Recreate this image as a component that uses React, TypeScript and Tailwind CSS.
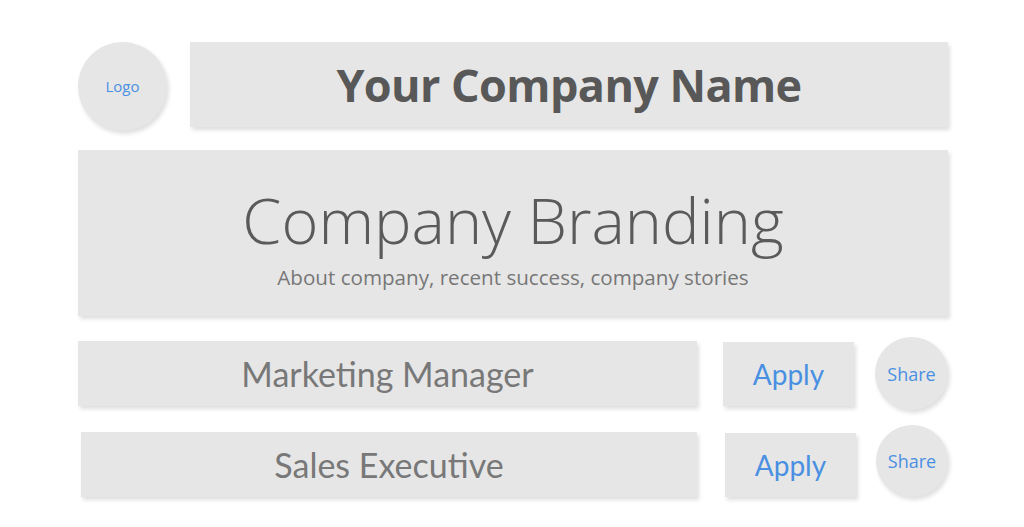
const jobs = [
  { title: "Marketing Manager", offset: "ml-0", box: "w-[619px]", apply: "ml-[26px]", align: "items-center", mt: "mt-[21px]", h: "h-[73px]", share: "w-[73px] h-[73px]" },
  { title: "Sales Executive", offset: "ml-[3px]", box: "w-[616px]", apply: "ml-[28px]", align: "items-end", mt: "mt-[15px]", h: "h-[72px]", share: "w-[72px] h-[72px]" },
];

const shadow = "shadow-[2px_3px_4px_rgba(0,0,0,0.13)]";

export default function App() {
  return (
    <div className="w-[1024px] h-[527px] bg-white overflow-hidden">
      <div className="pl-[78px] pt-[42px] w-[948px]">
        <div className="flex items-start">
          <div
            className={`w-[89px] h-[89px] rounded-full bg-[#e6e6e6] ${shadow} flex items-center justify-center text-[15px] text-[#4a90e2] font-['Open_Sans',sans-serif]`}
          >
            Logo
          </div>
          <div
            className={`ml-[23px] flex-1 h-[85px] bg-[#e6e6e6] ${shadow} flex items-center justify-center`}
          >
            <span className="font-['Open_Sans',sans-serif] font-bold text-[45px] text-[#585858] tracking-[-0.6px] leading-none">
              Your Company Name
            </span>
          </div>
        </div>

        <div
          className={`mt-[19px] h-[166px] bg-[#e6e6e6] ${shadow} flex flex-col items-center pt-[38px]`}
        >
          <span className="font-['Open_Sans',sans-serif] font-light text-[63px] text-[#5a5a5a] leading-none">
            Company Branding
          </span>
          <span className="mt-[16px] font-['Open_Sans',sans-serif] text-[20.6px] text-[#777777] leading-none">
            About company, recent success, company stories
          </span>
        </div>

        {jobs.map((job) => (
          <div key={job.title} className={`flex ${job.align} ${job.mt} ${job.h}`}>
            <div
              className={`${job.offset} ${job.box} h-[65px] bg-[#e6e6e6] ${shadow} flex items-center justify-center`}
            >
              <span className="font-['Lato',sans-serif] text-[34px] text-[#787878] leading-none">
                {job.title}
              </span>
            </div>
            <div
              className={`${job.apply} w-[131px] h-[64px] bg-[#e6e6e6] ${shadow} flex items-center justify-center`}
            >
              <span className="font-['Lato',sans-serif] text-[28px] text-[#4a90e2] leading-none">
                Apply
              </span>
            </div>
            <div
              className={`ml-auto ${job.share} rounded-full bg-[#e6e6e6] ${shadow} flex items-center justify-center`}
            >
              <span className="font-['Open_Sans',sans-serif] text-[18px] text-[#4a90e2] leading-none">
                Share
              </span>
            </div>
          </div>
        ))}
      </div>
    </div>
  );
}
